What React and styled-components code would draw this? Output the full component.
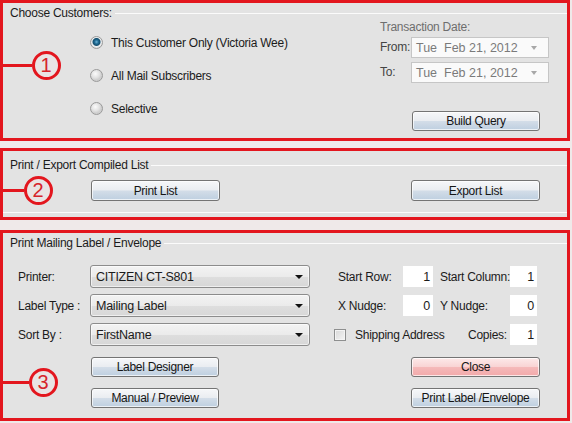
import React from 'react'
import styled, { createGlobalStyle } from 'styled-components'

const GlobalStyle = createGlobalStyle`
  html, body {
    margin: 0;
    padding: 0;
    background: #efe9e9;
  }
  body {
    font-family: 'Liberation Sans', Arial, sans-serif;
    font-size: 12px;
    letter-spacing: -0.25px;
    color: #1b1b1b;
  }
`

const RED = '#e3161e'

export default function App() {
  return (
    <Screen>
      <GlobalStyle />

      <Panel $height={141} $gap={7}>
        <GroupTitle $top={3}>
          <span>Choose Customers:</span>
        </GroupTitle>
        <CustomerBody>
          <RadioList>
            <RadioRow>
              <Radio $checked />
              <span>This Customer Only (Victoria Wee)</span>
            </RadioRow>
            <RadioRow>
              <Radio />
              <span>All Mail Subscribers</span>
            </RadioRow>
            <RadioRow>
              <Radio />
              <span>Selective</span>
            </RadioRow>
          </RadioList>
          <DateColumn>
            <TextLine>Transaction Date:</TextLine>
            <DateRow>
              <DateLabel>From:</DateLabel>
              <DateBox>
                <span>Tue&nbsp; Feb 21, 2012</span>
                <SmallArrow />
              </DateBox>
            </DateRow>
            <DateRow $gap={4}>
              <DateLabel>To:</DateLabel>
              <DateBox>
                <span>Tue&nbsp; Feb 21, 2012</span>
                <SmallArrow />
              </DateBox>
            </DateRow>
            <QueryButton>Build Query</QueryButton>
          </DateColumn>
        </CustomerBody>
        <Marker $cx={46} $cy={65}>1</Marker>
      </Panel>

      <Panel $height={72} $gap={10}>
        <GroupTitle $top={7}>
          <span>Print / Export Compiled List</span>
        </GroupTitle>
        <ExportRow>
          <Button>Print List</Button>
          <Button>Export List</Button>
        </ExportRow>
        <GroupBottom />
        <Marker $cx={38} $cy={42}>2</Marker>
      </Panel>

      <Panel $height={191}>
        <GroupTitle $top={3}>
          <span>Print Mailing Label / Envelope</span>
        </GroupTitle>
        <LabelBody>
          <Column $width={292}>
            <FieldRow>
              <RowLabel>Printer:</RowLabel>
              <Combo>
                <span>CITIZEN CT-S801</span>
                <BlackArrow />
              </Combo>
            </FieldRow>
            <FieldRow>
              <RowLabel>Label Type :</RowLabel>
              <Combo>
                <span>Mailing Label</span>
                <BlackArrow />
              </Combo>
            </FieldRow>
            <FieldRow>
              <RowLabel>Sort By :</RowLabel>
              <Combo>
                <span>FirstName</span>
                <BlackArrow />
              </Combo>
            </FieldRow>
            <ButtonStack $indent={73}>
              <Button $width={128}>Label Designer</Button>
              <Button $width={128}>Manual / Preview</Button>
            </ButtonStack>
          </Column>

          <Column $width={206}>
            <FieldRow $indent={4}>
              <FieldLabel $width={65}>Start Row:</FieldLabel>
              <NumBox $width={30}>1</NumBox>
              <FieldLabel $width={70} $indent={7}>Start Column:</FieldLabel>
              <NumBox $width={27}>1</NumBox>
            </FieldRow>
            <FieldRow $indent={4}>
              <FieldLabel $width={65}>X Nudge:</FieldLabel>
              <NumBox $width={30}>0</NumBox>
              <FieldLabel $width={70} $indent={7}>Y Nudge:</FieldLabel>
              <NumBox $width={27}>0</NumBox>
            </FieldRow>
            <FieldRow>
              <CheckBox />
              <FieldLabel $width={113} $indent={9}>Shipping Address</FieldLabel>
              <FieldLabel $width={42}>Copies:</FieldLabel>
              <NumBox $width={27}>1</NumBox>
            </FieldRow>
            <ButtonStack $align='flex-end'>
              <Button $width={129} $tone='pink'>Close</Button>
              <Button $width={129}>Print Label /Envelope</Button>
            </ButtonStack>
          </Column>
        </LabelBody>
        <Marker $cx={43} $cy={152}>3</Marker>
      </Panel>
    </Screen>
  )
}

function Marker({ $cx, $cy, children }) {
  return (
    <MarkerWrap style={{ top: $cy - 3 - 14.5 }}>
      <MarkerLine style={{ width: $cx - 14.5 }} />
      <MarkerCircle>{children}</MarkerCircle>
    </MarkerWrap>
  )
}

const Screen = styled.main`
  width: 572px;
  height: 423px;
  overflow: hidden;
  display: flex;
  flex-direction: column;
`

const Panel = styled.section`
  position: relative;
  box-sizing: border-box;
  width: 570px;
  height: ${(p) => p.$height}px;
  margin-bottom: ${(p) => p.$gap || 0}px;
  border: 3px solid ${RED};
  background: #e3e3e3;
  display: flex;
  flex-direction: column;
`

const GroupTitle = styled.div`
  display: flex;
  align-items: center;
  height: 14px;
  margin-top: ${(p) => p.$top}px;
  padding-left: 7px;
  white-space: nowrap;
  &::after {
    content: '';
    flex: 1;
    margin-left: 3px;
    border-top: 1px solid #fbfbfb;
  }
`

const GroupBottom = styled.div`
  margin-top: 11px;
  border-top: 1px solid #fbfbfb;
`

const CustomerBody = styled.div`
  display: flex;
  justify-content: space-between;
  padding: 0 18px 0 87px;
`

const RadioList = styled.div`
  display: flex;
  flex-direction: column;
  padding-top: 6px;
`

const RadioRow = styled.label`
  display: flex;
  align-items: center;
  gap: 8px;
  height: 33px;
`

const Radio = styled.span`
  box-sizing: border-box;
  width: 13px;
  height: 13px;
  border-radius: 50%;
  border: 1px solid #9a9a9a;
  background: ${(p) =>
    p.$checked
      ? 'radial-gradient(circle at 50% 45%, #6fb3d6 0, #1f6a93 2px, #17506f 3.5px, #eef0f2 4.5px, #dcdcdc 6px)'
      : 'radial-gradient(circle at 40% 35%, #fbfbfb 0, #e2e2e2 4px, #cfcfcf 6px)'};
`

const DateColumn = styled.div`
  width: 169px;
  display: flex;
  flex-direction: column;
`

const TextLine = styled.div`
  height: 14px;
  line-height: 14px;
  color: #6e6e6e;
`

const DateRow = styled.div`
  display: flex;
  align-items: center;
  margin-top: ${(p) => p.$gap || 3}px;
`

const DateLabel = styled.span`
  width: 31px;
  color: #444;
  align-self: flex-start;
  padding-top: 3px;
`

const DateBox = styled.div`
  box-sizing: border-box;
  width: 138px;
  height: 21px;
  border: 1px solid #c6c6c6;
  background: #fafafa;
  color: #7a7a7a;
  font-size: 12.5px;
  letter-spacing: 0;
  display: flex;
  align-items: center;
  justify-content: space-between;
  padding: 0 11px 0 4px;
`

const SmallArrow = styled.span`
  width: 0;
  height: 0;
  border-left: 3.5px solid transparent;
  border-right: 3.5px solid transparent;
  border-top: 4px solid #a8a8a8;
`

const BlackArrow = styled.span`
  width: 0;
  height: 0;
  border-left: 4px solid transparent;
  border-right: 4px solid transparent;
  border-top: 4px solid #111;
`

const Button = styled.button`
  box-sizing: border-box;
  width: ${(p) => p.$width || 129}px;
  height: 20px;
  padding: 0;
  border: 1px solid #747474;
  border-radius: 3px;
  font-family: inherit;
  font-size: 12px;
  letter-spacing: -0.3px;
  color: #151515;
  box-shadow: inset 0 0 0 1px rgba(255, 255, 255, 0.7);
  background: ${(p) =>
    p.$tone === 'pink'
      ? 'linear-gradient(#fdeaea 0%, #f9d4d4 48%, #f5b9b9 52%, #f2a9aa 100%)'
      : 'linear-gradient(#f6f7f9 0%, #eaedf1 48%, #d3dde8 52%, #becfe0 100%)'};
`

const QueryButton = styled(Button)`
  margin: 28px 0 0 32px;
  width: 128px;
`

const ExportRow = styled.div`
  display: flex;
  justify-content: space-between;
  margin-top: 8px;
  padding: 0 27px 0 88px;
  & > button {
    height: 21px;
  }
`

const LabelBody = styled.div`
  display: flex;
  gap: 24px;
  margin-top: 15px;
  padding-left: 15px;
`

const Column = styled.div`
  width: ${(p) => p.$width}px;
  display: flex;
  flex-direction: column;
  gap: 6px;
`

const FieldRow = styled.div`
  display: flex;
  align-items: center;
  height: 23px;
  padding-left: ${(p) => p.$indent || 0}px;
`

const RowLabel = styled.span`
  width: 72px;
  flex: none;
`

const Combo = styled.div`
  box-sizing: border-box;
  width: 220px;
  height: 23px;
  border: 1px solid #8c8c8c;
  border-radius: 3px;
  background: linear-gradient(#f3f3f3 0%, #ebebeb 50%, #dedede 51%, #d7d7d7 100%);
  box-shadow: inset 0 0 0 1px rgba(255, 255, 255, 0.6);
  display: flex;
  align-items: center;
  justify-content: space-between;
  padding: 0 6px 0 5px;
  font-size: 12.5px;
`

const FieldLabel = styled.span`
  width: ${(p) => p.$width}px;
  margin-left: ${(p) => p.$indent || 0}px;
  flex: none;
  white-space: nowrap;
`

const NumBox = styled.div`
  box-sizing: border-box;
  width: ${(p) => p.$width}px;
  height: 21px;
  background: #fff;
  display: flex;
  align-items: center;
  justify-content: flex-end;
  padding-right: 3px;
  font-size: 12.5px;
`

const CheckBox = styled.span`
  box-sizing: border-box;
  width: 12px;
  height: 12px;
  flex: none;
  border: 1px solid #8e8f8f;
  background: linear-gradient(135deg, #d8d8d8, #f5f5f5);
  box-shadow: inset 0 0 0 1px #f4f4f4;
`

const ButtonStack = styled.div`
  display: flex;
  flex-direction: column;
  align-items: ${(p) => p.$align || 'flex-start'};
  gap: 11px;
  margin-top: 5px;
  padding-left: ${(p) => p.$indent || 0}px;
`

const MarkerWrap = styled.div`
  position: absolute;
  left: -3px;
  display: flex;
  align-items: center;
`

const MarkerLine = styled.span`
  height: 3px;
  background: ${RED};
`

const MarkerCircle = styled.span`
  box-sizing: border-box;
  width: 29px;
  height: 29px;
  border: 3px solid ${RED};
  border-radius: 50%;
  background: #e9e4e4;
  display: flex;
  align-items: center;
  justify-content: center;
  color: #d6242b;
  font-size: 20px;
  letter-spacing: 0;
  line-height: 1;
`
